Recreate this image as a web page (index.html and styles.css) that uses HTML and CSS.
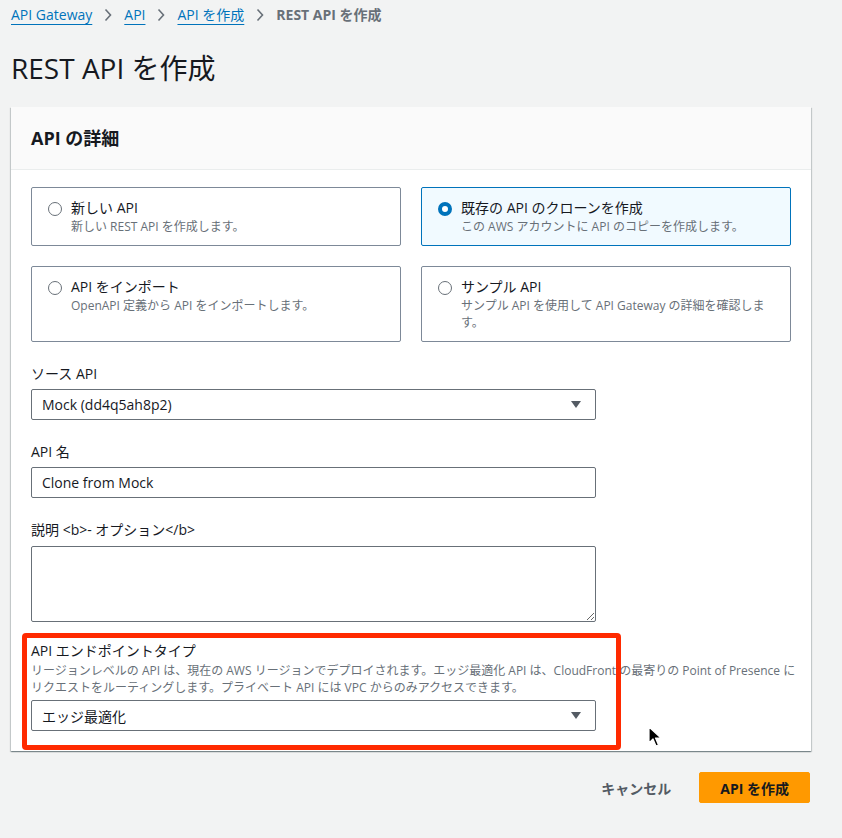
FILE: index.html
```html
<!DOCTYPE html>
<html lang="ja">
<head>
  <meta charset="utf-8">
  <meta name="viewport" content="width=device-width, initial-scale=1">
  <link rel="stylesheet" href="styles.css">
</head>
<body>
<div class="page">
  <nav class="crumbs">
    <a href="#">API Gateway</a>
    <svg class="sep" viewBox="0 0 8 14" width="8" height="14"><path d="M1.5 1.5 L6.5 7 L1.5 12.5" fill="none" stroke="#687078" stroke-width="1.6"/></svg>
    <a href="#">API</a>
    <svg class="sep" viewBox="0 0 8 14" width="8" height="14"><path d="M1.5 1.5 L6.5 7 L1.5 12.5" fill="none" stroke="#687078" stroke-width="1.6"/></svg>
    <a href="#">API を作成</a>
    <svg class="sep" viewBox="0 0 8 14" width="8" height="14"><path d="M1.5 1.5 L6.5 7 L1.5 12.5" fill="none" stroke="#687078" stroke-width="1.6"/></svg>
    <span class="current">REST API を作成</span>
  </nav>

  <h1 class="title">REST API を作成</h1>

  <section class="card">
    <div class="card-head">
      <h2>API の詳細</h2>
    </div>
    <div class="card-body">
      <div class="tiles">
        <label class="tile">
          <span class="radio"></span>
          <span class="tile-text">
            <span class="tile-title">新しい API</span>
            <span class="tile-desc">新しい REST API を作成します。</span>
          </span>
        </label>
        <label class="tile selected">
          <span class="radio on"></span>
          <span class="tile-text">
            <span class="tile-title">既存の API のクローンを作成</span>
            <span class="tile-desc">この AWS アカウントに API のコピーを作成します。</span>
          </span>
        </label>
        <label class="tile">
          <span class="radio"></span>
          <span class="tile-text">
            <span class="tile-title">API をインポート</span>
            <span class="tile-desc">OpenAPI 定義から API をインポートします。</span>
          </span>
        </label>
        <label class="tile">
          <span class="radio"></span>
          <span class="tile-text">
            <span class="tile-title">サンプル API</span>
            <span class="tile-desc">サンプル API を使用して API Gateway の詳細を確認します。</span>
          </span>
        </label>
      </div>

      <div class="field">
        <div class="label">ソース API</div>
        <div class="select">
          <span>Mock (dd4q5ah8p2)</span>
          <svg class="caret" viewBox="0 0 10 8" width="10" height="8"><path d="M0 0 H10 L5 7 Z" fill="#545b64"/></svg>
        </div>
      </div>

      <div class="field">
        <div class="label">API 名</div>
        <input class="input" type="text" value="Clone from Mock">
      </div>

      <div class="field">
        <div class="label">説明 &lt;b&gt;- オプション&lt;/b&gt;</div>
        <textarea class="input area"></textarea>
      </div>

      <div class="field endpoint">
        <div class="label tight">API エンドポイントタイプ</div>
        <div class="hint">リージョンレベルの API は、現在の AWS リージョンでデプロイされます。エッジ最適化 API は、CloudFront の最寄りの Point of Presence にリクエストをルーティングします。プライベート API には VPC からのみアクセスできます。</div>
        <div class="select">
          <span>エッジ最適化</span>
          <svg class="caret" viewBox="0 0 10 8" width="10" height="8"><path d="M0 0 H10 L5 7 Z" fill="#545b64"/></svg>
        </div>
        <div class="highlight"></div>
      </div>
    </div>
  </section>

  <div class="actions">
    <button class="btn-link">キャンセル</button>
    <button class="btn-primary">API を作成</button>
  </div>

  <svg class="cursor" viewBox="0 0 14 22" width="14" height="22">
    <path d="M1 1 L1 17 L5 13 L8 20 L10.5 19 L7.5 12 L13 12 Z" fill="#000" stroke="#fff" stroke-width="1.2" stroke-linejoin="round"/>
  </svg>
</div>
</body>
</html>
```

FILE: styles.css
```css
html, body {
  margin: 0;
  background: #f2f3f3;
  color: #16191f;
  font-family: "Open Sans", "Noto Sans CJK JP", sans-serif;
  font-size: 14px;
}
.page {
  position: relative;
  width: 842px;
  min-height: 838px;
}

/* breadcrumbs */
.crumbs {
  display: flex;
  align-items: center;
  gap: 12px;
  padding: 5px 0 0 11px;
  height: 20px;
  line-height: 20px;
}
.crumbs a {
  color: #0073bb;
  text-decoration: underline;
  text-underline-offset: 4px;
}
.crumbs .sep {
  display: block;
}
.crumbs .current {
  color: #687078;
  font-weight: bold;
}

.title {
  margin: 25px 0 0 11px;
  font-size: 28px;
  line-height: 36px;
  font-weight: normal;
}

/* card */
.card {
  margin: 21px 0 0 11px;
  width: 800px;
  background: #fff;
  box-shadow: 0 1px 1px 0 rgba(0, 28, 36, 0.3), 1px 1px 1px 0 rgba(0, 28, 36, 0.15), -1px 1px 1px 0 rgba(0, 28, 36, 0.15);
}
.card-head {
  background: #fafafa;
  border-bottom: 1px solid #eaeded;
  padding: 20px;
}
.card-head h2 {
  margin: 0;
  font-size: 18px;
  line-height: 22px;
  font-weight: bold;
}
.card-body {
  padding: 17px 20px 20px;
}

.tiles {
  display: grid;
  grid-template-columns: 1fr 1fr;
  gap: 20px;
}
.tile {
  display: flex;
  gap: 9px;
  border: 1px solid #7d8998;
  border-radius: 2px;
  padding: 10px 16px 10px;
}
.tile.selected {
  border-color: #0073bb;
  background: #f1faff;
}
.radio {
  flex: none;
  width: 12px;
  height: 12px;
  margin-top: 4px;
  border: 1px solid #687078;
  border-radius: 50%;
  background: #fff;
}
.radio.on {
  width: 6px;
  height: 6px;
  border: 4px solid #0073bb;
}
.tile-text {
  display: flex;
  flex-direction: column;
}
.tile-title {
  line-height: 20px;
}
.tile-desc {
  font-size: 12px;
  line-height: 17px;
  color: #687078;
}

/* form fields */
.field {
  margin-top: 22px;
  width: 565px;
}
.field.endpoint {
  position: relative;
  width: 760px;
  margin-top: 19px;
}
.label {
  line-height: 20px;
  margin-bottom: 5px;
}
.label.tight {
  margin-bottom: 1px;
}
.hint {
  width: 772px;
  font-size: 12px;
  line-height: 17px;
  color: #687078;
  margin-bottom: 4px;
}
.select, .input {
  box-sizing: border-box;
  width: 565px;
  height: 31px;
  border: 1px solid #687078;
  border-radius: 2px;
  background: #fff;
  font-family: inherit;
  font-size: 14px;
  color: #16191f;
}
.select {
  display: flex;
  align-items: center;
  justify-content: space-between;
  padding: 0 14px 0 10px;
}
.input {
  display: block;
  padding: 0 10px;
}
.input.area {
  height: 76px;
  margin-top: 6px;
  resize: vertical;
}
.highlight {
  position: absolute;
  left: -9px;
  top: -8px;
  width: 599px;
  height: 117px;
  box-sizing: border-box;
  border: 5px solid #ff2a00;
  border-radius: 4px;
}

/* footer buttons */
.actions {
  display: flex;
  justify-content: flex-end;
  gap: 8px;
  width: 799px;
  margin: 21px 0 0 11px;
}
.actions button {
  font-family: inherit;
  font-size: 14px;
  font-weight: bold;
  height: 31px;
  padding: 0 20px;
  border-radius: 2px;
  cursor: pointer;
}
.btn-link {
  background: none;
  border: none;
  color: #545b64;
}
.btn-primary {
  background: #ff9900;
  border: 1px solid #ff9900;
  color: #16191f;
}

.cursor {
  position: absolute;
  left: 648px;
  top: 726px;
}
```
